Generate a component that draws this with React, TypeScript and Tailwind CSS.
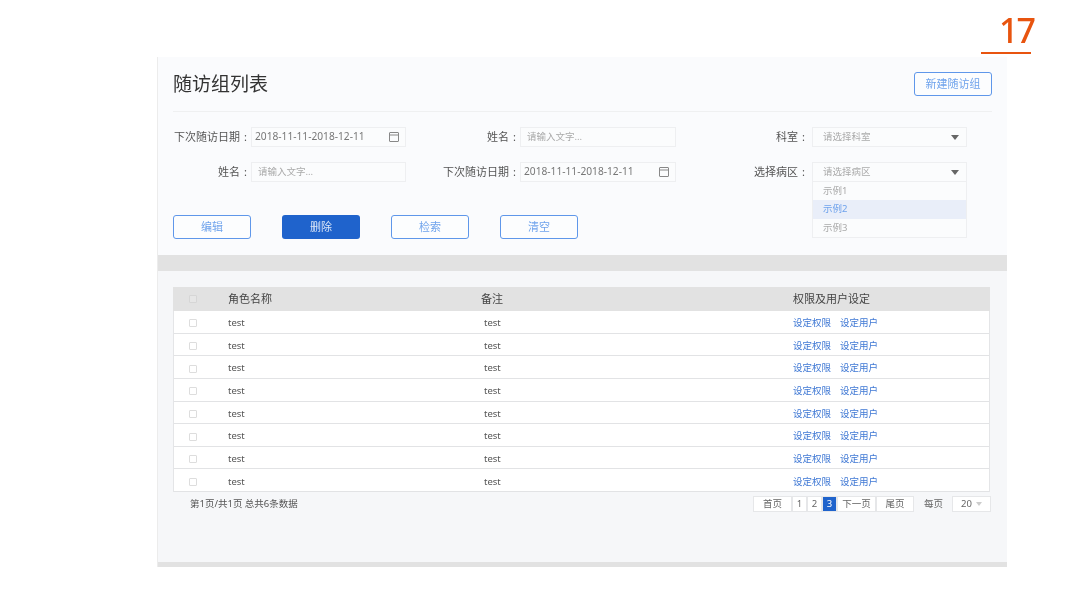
const FONT = "font-['Noto_Sans','Noto_Sans_CJK_SC',sans-serif]";

function Calendar() {
  return (
    <svg width="10" height="10" viewBox="0 0 10 10" fill="none" stroke="#888" strokeWidth="1">
      <rect x="0.5" y="0.5" width="9" height="9" rx="0.5" />
      <path d="M0.5 3h9" />
    </svg>
  );
}

function Caret() {
  return <span className="h-0 w-0 border-x-[4.5px] border-t-[5px] border-x-transparent border-t-[#666]" />;
}

function Label({ text, wide }: { text: string; wide?: boolean }) {
  return (
    <div className={`flex h-5 items-center justify-end whitespace-nowrap text-[11px] text-[#555] ${wide ? 'pr-[4px]' : 'pr-[1px]'}`}>
      {text}
      <span className="ml-[4px] w-[6px]">:</span>
    </div>
  );
}

function DateInput() {
  return (
    <div className="flex h-5 items-center justify-between border border-[#eeeff1] bg-[#fbfcfd] pr-[6px] pl-[3px] text-[10.2px] text-[#777]">
      2018-11-11-2018-12-11
      <Calendar />
    </div>
  );
}

function TextInput() {
  return (
    <div className="flex h-5 items-center border border-[#eeeff1] bg-[#fbfcfd] pt-[1px] pl-[6px] text-[9.5px] text-[#aaa]">
      请输入文字...
    </div>
  );
}

function Select({ text, children }: { text: string; children?: React.ReactNode }) {
  return (
    <div className="relative flex h-5 items-center justify-between border border-[#eeeff1] bg-[#fbfcfd] pr-[7px] pl-[10px] text-[9.5px] text-[#aaa]">
      <span className="pt-[1px]">{text}</span>
      <Caret />
      {children}
    </div>
  );
}

function Button({ text, primary }: { text: string; primary?: boolean }) {
  return (
    <button
      className={
        primary
          ? 'h-[24px] w-[78px] rounded-[3px] bg-[#1f63cc] text-[11px] text-[#dbe6f7]'
          : 'h-[24px] w-[78px] rounded-[3px] border border-[#5f97ea] bg-[#fcfdfe] text-[11px] text-[#6fa3ec]'
      }
    >
      {text}
    </button>
  );
}

function Check({ dark }: { dark?: boolean }) {
  return (
    <span
      className={
        dark
          ? 'block h-[8px] w-[8px] rounded-[1px] border border-[#d6d6d6] bg-[#e6e6e6]'
          : 'block h-[8px] w-[8px] rounded-[1px] border border-[#dddddd] bg-white'
      }
    />
  );
}

const rows = [0, 1, 2, 3, 4, 5, 6, 7];

function PageCell({ text, width, active }: { text: string; width: string; active?: boolean }) {
  return (
    <span
      className={`flex h-[16px] items-center justify-center border border-[#e6e7e9] text-[9.5px] ${width} ${
        active ? 'border-[#1f63cc] bg-[#1f63cc] text-white' : 'bg-white text-[#666]'
      }`}
    >
      {text}
    </span>
  );
}

export default function App() {
  return (
    <div className={`relative h-[600px] w-[1067px] overflow-hidden bg-white blur-[0.4px] ${FONT}`}>
      {/* Page number */}
      <div className="absolute top-[9px] left-[981px] w-[50px]">
        <div className="pl-[18px] text-[34px] leading-[43px] font-medium tracking-[-2px] whitespace-nowrap text-[#e8540f]">17</div>
        <div className="h-[2px] bg-[#e8540f]" />
      </div>

      <div className="ml-[157px] w-[850px] pt-[57px]">
        <div className="border-l border-[#ececec]">
          {/* Search form */}
          <div className="h-[198px] bg-[#fafbfd] px-[15px]">
            <div className="flex h-[55px] items-center justify-between border-b border-[#eff0f1]">
              <h1 className="text-[19px] text-[#333]">随访组列表</h1>
              <button className="h-[24px] w-[78px] rounded-[3px] border border-[#5f97ea] bg-[#fcfdfe] text-[11px] text-[#6fa3ec]">
                新建随访组
              </button>
            </div>

            <div className="mt-[15px] grid grid-cols-[78px_155px_114px_156px_136px_155px] gap-y-[15px]">
              <Label text="下次随访日期" />
              <DateInput />
              <Label text="姓名" />
              <TextInput />
              <Label text="科室" wide />
              <Select text="请选择科室" />
              <Label text="姓名" />
              <TextInput />
              <Label text="下次随访日期" />
              <DateInput />
              <Label text="选择病区" wide />
              <Select text="请选择病区">
                <div className="absolute top-[19px] -right-px -left-px border-x border-b border-[#eeeff1] bg-[#fbfcfd] text-[9.5px] text-[#aaa]">
                  <div className="flex h-[18px] items-center pl-[10px]">示例1</div>
                  <div className="flex h-[19px] items-center bg-[#e9eef9] pl-[10px] text-[#6fa3ec]">示例2</div>
                  <div className="flex h-[18px] items-center pl-[10px]">示例3</div>
                </div>
              </Select>
            </div>

            <div className="mt-[33px] flex gap-[31px]">
              <Button text="编辑" />
              <Button text="删除" primary />
              <Button text="检索" />
              <Button text="清空" />
            </div>
          </div>

          <div className="h-[16px] bg-[#e2e2e2]" />

          {/* Table */}
          <div className="h-[291px] bg-[#f6f7f9] px-[15px] pt-[16px]">
            <div className="w-[817px]">
              <div className="grid h-[24px] grid-cols-[55px_253px_312px_1fr] items-center bg-[#e2e2e2] text-[11px] text-[#444]">
                <span className="pl-[16px]"><Check dark /></span>
                <span>角色名称</span>
                <span>备注</span>
                <span>权限及用户设定</span>
              </div>
              <div className="border-x border-[#e4e5e7]">
                {rows.map((row) => (
                  <div
                    key={row}
                    className="grid h-[22.65px] grid-cols-[54px_253px_312px_1fr] items-center border-b border-[#e2e3e5] bg-white pt-[3px] text-[9.5px] text-[#555]"
                  >
                    <span className="pl-[15px]"><Check /></span>
                    <span>test</span>
                    <span className="pl-[3px]">test</span>
                    <span className="flex gap-[9px] text-[#3f78d4]">
                      <span>设定权限</span>
                      <span>设定用户</span>
                    </span>
                  </div>
                ))}
              </div>

              <div className="mt-[4px] -mr-px flex items-center justify-between pl-[17px] text-[9.5px] text-[#555]">
                <span>第1页/共1页 总共6条数据</span>
                <div className="flex items-center">
                  <PageCell text="首页" width="w-[39px]" />
                  <PageCell text="1" width="w-[15px]" />
                  <PageCell text="2" width="w-[15px]" />
                  <PageCell text="3" width="w-[15px]" active />
                  <PageCell text="下一页" width="w-[39px]" />
                  <PageCell text="尾页" width="w-[38px]" />
                  <span className="mr-[9px] ml-[10px] text-[#666]">每页</span>
                  <span className="flex h-[16px] w-[39px] items-center justify-center gap-[4px] border border-[#e6e7e9] bg-white text-[#666]">
                    20
                    <span className="h-0 w-0 border-x-[3.5px] border-t-[4px] border-x-transparent border-t-[#ccc]" />
                  </span>
                </div>
              </div>
            </div>
          </div>

          <div className="h-[5px] bg-[#e2e2e2]" />
        </div>
      </div>
    </div>
  );
}
